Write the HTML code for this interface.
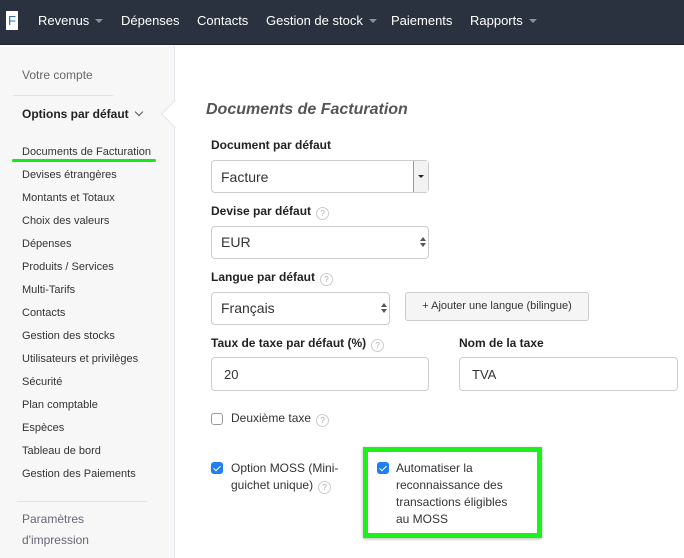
<!DOCTYPE html>
<html><head><meta charset="utf-8"><style>
*{box-sizing:border-box;margin:0;padding:0}
body{width:684px;height:558px;overflow:hidden;font-family:"Liberation Sans",sans-serif;background:#fff;position:relative;color:#333}
.nav{position:absolute;left:0;top:0;width:684px;height:45px;background:#29323e;border-bottom:1px solid #1c232c}
.nav .logo{position:absolute;left:6px;top:11px;width:12px;height:19px;background:#fff;color:#2a6fb8;font-size:13px;line-height:19px;text-align:center}
.nav span.i{position:absolute;top:13px;color:#fff;font-size:13px}
.car{display:inline-block;width:0;height:0;border-left:4px solid transparent;border-right:4px solid transparent;border-top:4px solid #8a929c;margin-left:6px;vertical-align:2px}
.side{position:absolute;left:0;top:46px;width:175px;height:512px;background:#f7f7f7;border-right:1px solid #e2e6ea}
.s{position:absolute;left:22px;font-size:11px;color:#333}
.hr{position:absolute;left:13px;width:100px;height:1px;background:#dde3e8}
.notch{position:absolute;left:165px;top:104px;width:20px;height:20px;background:#fff;transform:rotate(45deg);border-left:1px solid #e2e6ea;border-bottom:1px solid #e2e6ea}
.lbl{position:absolute;font-size:12px;font-weight:bold;color:#222}
.box{position:absolute;border:1px solid #ccc;border-radius:4px;background:#fff;font-size:14px;color:#333;padding-left:9px;line-height:30px}
.q{display:inline-block;width:13px;height:13px;border:1px solid #ccc;border-radius:50%;font-size:8px;color:#aaa;text-align:center;line-height:11px;font-weight:normal;margin-left:5px;vertical-align:-1px}
.ud{position:absolute;right:8px;top:10px;font-size:0}
.ud:before{content:"";position:absolute;left:0;top:0;border-left:3px solid transparent;border-right:3px solid transparent;border-bottom:4px solid #555}
.ud:after{content:"";position:absolute;left:0;top:6px;border-left:3px solid transparent;border-right:3px solid transparent;border-top:4px solid #555}
.cb{position:absolute;width:12px;height:12px;border-radius:3px}
.cb.on{background:#1e7ef3}
.cb.on:after{content:"";position:absolute;left:4px;top:1.5px;width:3px;height:6px;border:solid #fff;border-width:0 1.5px 1.5px 0;transform:rotate(45deg)}
.cb.off{border:1px solid #999;background:#fff}
.t{position:absolute;font-size:12px;color:#333;line-height:17px}
.chev{display:inline-block;width:6px;height:6px;border:solid #555;border-width:0 1.5px 1.5px 0;transform:rotate(45deg);margin-left:7px;vertical-align:3px}
</style></head><body>
<div class="nav">
<div class="logo">F</div>
<span class="i" style="left:38px">Revenus<span class="car"></span></span>
<span class="i" style="left:121px">Dépenses</span>
<span class="i" style="left:197px">Contacts</span>
<span class="i" style="left:266px">Gestion de stock<span class="car"></span></span>
<span class="i" style="left:391px">Paiements</span>
<span class="i" style="left:470px">Rapports<span class="car"></span></span>
</div>
<div class="side">
<div class="s" style="top:22px;color:#666;font-size:12px">Votre compte</div>
<div class="hr" style="top:49px"></div>
<div class="s" style="top:61px;font-weight:bold;font-size:12px;color:#222">Options par défaut<span class="chev"></span></div>
<div class="s" style="top:100px">Documents de Facturation</div>
<div style="position:absolute;left:12px;top:113px;width:144px;height:3px;background:#19e61a;border-radius:2px"></div>
<div class="s" style="top:123px">Devises étrangères</div>
<div class="s" style="top:146px">Montants et Totaux</div>
<div class="s" style="top:169px">Choix des valeurs</div>
<div class="s" style="top:192px">Dépenses</div>
<div class="s" style="top:215px">Produits / Services</div>
<div class="s" style="top:238px">Multi-Tarifs</div>
<div class="s" style="top:261px">Contacts</div>
<div class="s" style="top:284px">Gestion des stocks</div>
<div class="s" style="top:307px">Utilisateurs et privilèges</div>
<div class="s" style="top:330px">Sécurité</div>
<div class="s" style="top:353px">Plan comptable</div>
<div class="s" style="top:376px">Espèces</div>
<div class="s" style="top:399px">Tableau de bord</div>
<div class="s" style="top:422px">Gestion des Paiements</div>
<div class="hr" style="top:455px;left:17px;width:130px"></div>
<div class="s" style="top:463px;color:#667;font-size:12px;line-height:21px">Paramètres<br>d'impression</div>
</div>
<div class="notch"></div>
<div style="position:absolute;left:206px;top:101px;font-size:16px;font-weight:bold;font-style:italic;color:#555">Documents de Facturation</div>
<div class="lbl" style="left:211px;top:138px">Document par défaut</div>
<div class="box" style="left:211px;top:160px;width:218px;height:33px;line-height:32px">Facture<div style="position:absolute;right:0;top:0;width:15px;height:31px;border-left:1px solid #999;background:#f2f2f2"><div style="position:absolute;left:4px;top:14px;border-left:3px solid transparent;border-right:3px solid transparent;border-top:3px solid #222"></div></div></div>
<div class="lbl" style="left:211px;top:204px">Devise par défaut<span class="q">?</span></div>
<div class="box" style="left:211px;top:226px;width:218px;height:33px">EUR<span class="ud"></span></div>
<div class="lbl" style="left:211px;top:270px">Langue par défaut<span class="q">?</span></div>
<div class="box" style="left:211px;top:292px;width:179px;height:33px">Français<span class="ud"></span></div>
<div style="position:absolute;left:405px;top:292px;width:184px;height:29px;border:1px solid #ccc;border-radius:3px;background:#f5f5f5;font-size:11px;color:#333;text-align:center;line-height:27px">+ Ajouter une langue (bilingue)</div>
<div class="lbl" style="left:211px;top:336px">Taux de taxe par défaut (%)<span class="q">?</span></div>
<div class="box" style="left:211px;top:357px;width:218px;height:34px;line-height:33px;font-size:13px;padding-left:12px">20</div>
<div class="lbl" style="left:459px;top:336px">Nom de la taxe</div>
<div class="box" style="left:459px;top:357px;width:219px;height:34px;line-height:33px;font-size:13px;padding-left:12px">TVA</div>
<div class="cb off" style="left:211px;top:413px"></div>
<div class="t" style="left:231px;top:410px">Deuxième taxe<span class="q">?</span></div>
<div class="cb on" style="left:211px;top:462px"></div>
<div class="t" style="left:231px;top:460px">Option MOSS (Mini-<br>guichet unique)<span class="q">?</span></div>
<div style="position:absolute;left:363px;top:447px;width:179px;height:91px;border:5px solid #1ef01e;box-shadow:0 1px 3px rgba(0,0,0,.3)"></div>
<div class="cb on" style="left:377px;top:462px"></div>
<div class="t" style="left:396px;top:460px">Automatiser la<br>reconnaissance des<br>transactions éligibles<br>au MOSS</div>
</body></html>
